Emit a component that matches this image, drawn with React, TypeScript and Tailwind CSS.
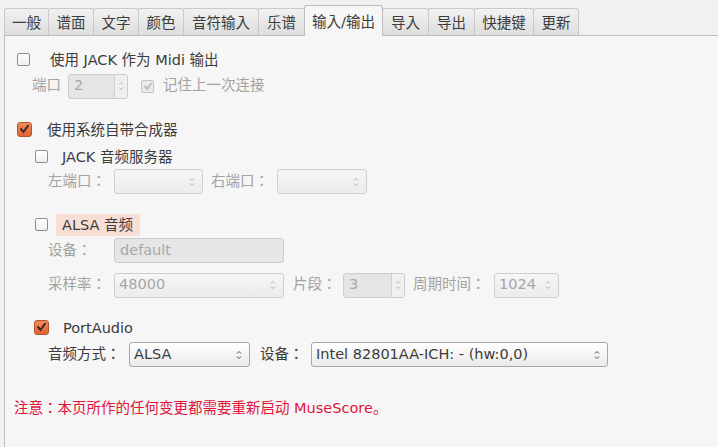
const font = "font-['DejaVu_Sans','Noto_Sans_CJK_JP',sans-serif]";

const tabs = ["一般", "谱面", "文字", "颜色", "音符输入", "乐谱", "输入/输出", "导入", "导出", "快捷键", "更新"];
// left edges of each tab, last value is the right edge of the last tab
const edges = [4, 48, 93, 138, 183, 258, 304, 382, 428, 474, 533, 578];
const ACTIVE = 6;

function Arrows({ disabled }: { disabled?: boolean }) {
  const c = disabled ? "#b4b4b4" : "#4a4a4a";
  return (
    <svg width="6" height="12" viewBox="0 0 6 12" className="shrink-0">
      <path d="M1 4.5 L3 2.5 L5 4.5" fill="none" stroke={c} strokeWidth="1" />
      <path d="M1 7.5 L3 9.5 L5 7.5" fill="none" stroke={c} strokeWidth="1" />
    </svg>
  );
}

function Check({ state }: { state: "off" | "on" | "dis" }) {
  if (state === "on")
    return (
      <span className="w-[15px] h-[15px] rounded-[3px] border border-[#b5552b] bg-gradient-to-b from-[#f38b5c] to-[#e0622f] flex items-center justify-center shrink-0">
        <svg width="11" height="10" viewBox="0 0 11 10">
          <path d="M1.5 4.5 L4.5 8 L9.5 1" fill="none" stroke="#3a2a24" strokeWidth="2" />
        </svg>
      </span>
    );
  if (state === "dis")
    return (
      <span className="w-[13px] h-[13px] rounded-[2px] border border-[#c4c4c4] bg-[#ebebeb] flex items-center justify-center shrink-0">
        <svg width="10" height="9" viewBox="0 0 10 9">
          <path d="M1.5 4 L4 7 L8.5 1" fill="none" stroke="#b9b9b9" strokeWidth="1.8" />
        </svg>
      </span>
    );
  return <span className="w-[13px] h-[13px] rounded-[2px] border border-[#8e8e8e] bg-gradient-to-b from-white to-[#efefef] shrink-0" />;
}

function Combo({ w, text, disabled }: { w: number; text?: string; disabled?: boolean }) {
  return (
    <div
      className={`h-[25px] rounded-[3px] border flex items-center justify-between pl-[4px] pr-[7px] shrink-0 ${
        disabled
          ? "border-[#cfcfcf] bg-gradient-to-b from-[#f6f6f6] to-[#ececec] text-[#a6a6a6]"
          : "border-[#a7a7a7] bg-gradient-to-b from-[#ffffff] to-[#eaeaea] text-[#3c3c3c]"
      }`}
      style={{ width: w }}
    >
      <span>{text}</span>
      <Arrows disabled={disabled} />
    </div>
  );
}

function Spin({ w, text }: { w: number; text: string }) {
  return (
    <div className="h-[25px] rounded-[3px] border border-[#cdcdcd] bg-[#e5e5e5] flex items-stretch shrink-0 overflow-hidden" style={{ width: w }}>
      <span className="flex-1 flex items-center pl-[5px] text-[#a8a8a8]">{text}</span>
      <span className="w-[13px] border-l border-[#d2d2d2] bg-[#f0f0f0] flex items-center justify-center">
        <Arrows disabled />
      </span>
    </div>
  );
}

function Label({ w, children, dim = true }: { w: number; children: React.ReactNode; dim?: boolean }) {
  return (
    <span className={`shrink-0 ${dim ? "text-[#a3a3a3]" : "text-[#3c3c3c]"}`} style={{ width: w }}>
      {children}
    </span>
  );
}

export default function App() {
  return (
    <div className={`w-[718px] h-[447px] overflow-hidden bg-[#f2f1f0] text-[14.5px] text-[#3c3c3c] ${font}`}>
      {/* tab bar */}
      <div className="flex items-end h-[35px] pl-[4px]">
        {tabs.map((t, i) => {
          const w = edges[i + 1] - edges[i] + 1;
          return i === ACTIVE ? (
            <div
              key={t}
              className="h-[31px] -mb-px -mr-px relative z-10 flex items-center justify-center pt-[3px] rounded-t-[3px] border border-b-0 border-[#bdbdbd] bg-[#f6f6f6] text-[#3a3a3a]"
              style={{ width: w }}
            >
              {t}
            </div>
          ) : (
            <div
              key={t}
              className="h-[27px] -mr-px flex items-center justify-center pt-[3px] rounded-t-[3px] border border-b-0 border-[#c9c9c9] bg-gradient-to-b from-[#f1f1f1] to-[#dedede] text-[#3c3c3c]"
              style={{ width: w }}
            >
              {t}
            </div>
          );
        })}
      </div>

      {/* panel */}
      <div className="ml-[4px] h-[412px] border-t border-l border-[#bdbdbd] bg-[#f6f6f6] flex flex-col">
        {/* JACK midi */}
        <div className="mt-[9px] h-[28px] flex items-center pl-[12px]">
          <Check state="off" />
          <span className="ml-[20px] pt-[4px]">使用 JACK 作为 Midi 输出</span>
        </div>
        <div className="h-[26px] flex items-center pl-[27px]">
          <Label w={36}>端口</Label>
          <Spin w={60} text="2" />
          <span className="ml-[13px]"><Check state="dis" /></span>
          <span className="ml-[9px] text-[#a3a3a3]">记住上一次连接</span>
        </div>

        {/* synth */}
        <div className="mt-[16px] h-[28px] flex items-center pl-[12px]">
          <Check state="on" />
          <span className="ml-[15px] pt-[4px]">使用系统自带合成器</span>
        </div>
        <div className="h-[26px] flex items-center pl-[30px]">
          <Check state="off" />
          <span className="ml-[14px] pt-[3px]">JACK 音频服务器</span>
        </div>
        <div className="h-[25px] flex items-center pl-[43px]">
          <Label w={66}>左端口：</Label>
          <Combo w={89} disabled />
          <span className="ml-[8px]" />
          <Label w={66}>右端口：</Label>
          <Combo w={90} disabled />
        </div>

        {/* ALSA */}
        <div className="mt-[17px] h-[27px] flex items-center pl-[30px]">
          <Check state="off" />
          <span className="ml-[8px] h-[22px] w-[84px] bg-[#f8dfd6] flex items-center pl-[6px] pt-[2px]">ALSA 音频</span>
        </div>
        <div className="h-[25px] flex items-center pl-[43px]">
          <Label w={66}>设备：</Label>
          <div className="h-[25px] w-[170px] rounded-[3px] border border-[#cdcdcd] bg-[#e6e6e6] flex items-center pl-[5px] text-[#a8a8a8]">default</div>
        </div>
        <div className="mt-[9px] h-[26px] flex items-center pl-[43px]">
          <Label w={66}>采样率：</Label>
          <Combo w={170} text="48000" disabled />
          <span className="ml-[9px]" />
          <Label w={50}>片段：</Label>
          <Spin w={62} text="3" />
          <span className="ml-[8px]" />
          <Label w={81}>周期时间：</Label>
          <Combo w={65} text="1024" disabled />
        </div>

        {/* PortAudio */}
        <div className="mt-[16px] h-[26px] flex items-center pl-[29px]">
          <Check state="on" />
          <span className="ml-[14px] pt-[3px]">PortAudio</span>
        </div>
        <div className="mt-[2px] h-[25px] flex items-center pl-[43px]">
          <Label w={81} dim={false}>音频方式：</Label>
          <Combo w={121} text="ALSA" />
          <span className="ml-[10px]" />
          <Label w={51} dim={false}>设备：</Label>
          <Combo w={297} text="Intel 82801AA-ICH: - (hw:0,0)" />
        </div>

        <div className="mt-[32px] h-[20px] flex items-center pl-[9px] text-[#e2143c]">
          注意：本页所作的任何变更都需要重新启动 MuseScore。
        </div>
      </div>
    </div>
  );
}
